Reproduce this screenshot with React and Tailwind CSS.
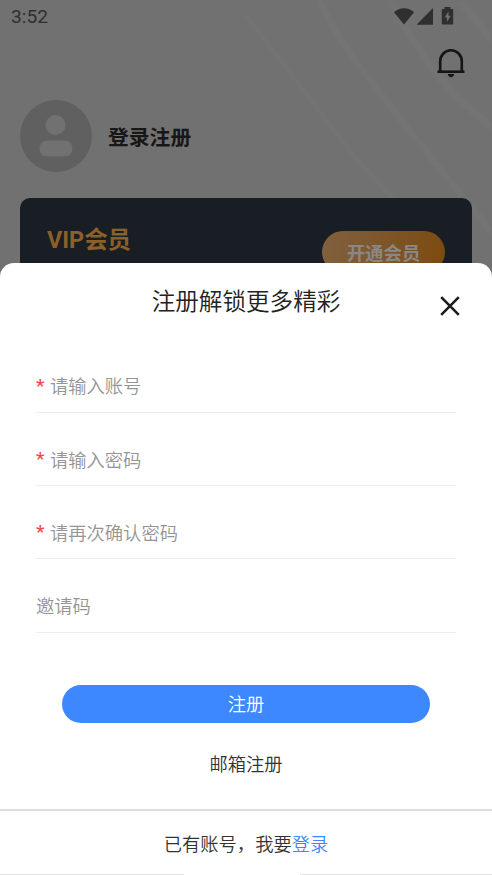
import React, { useState } from "react";

const fields = [
  { name: "account", placeholder: "请输入账号", required: true },
  { name: "password", placeholder: "请输入密码", required: true, type: "password" },
  { name: "confirm", placeholder: "请再次确认密码", required: true, type: "password" },
  { name: "invite", placeholder: "邀请码", required: false },
];

const StatusBar = () => (
  <div className="flex h-[34px] items-center justify-between pl-[11px] pr-[37px] text-[#2f2f2f]">
    <span className="font-[Roboto] text-[19.200px] font-[450] leading-none">3:52</span>
    <svg width="62" height="20" viewBox="0 0 62 20" fill="currentColor">
      <path d="M1 5.200C6.500 -.2 15.500 -.2 21 5.200L11 17.400Z" />
      <path d="M40 1v16.800H23.500Z" />
      <path
        fillRule="evenodd"
        d="M51.500 0h6v2h1.700a1 1 0 0 1 1 1v13.500a1 1 0 0 1-1 1h-9.400a1 1 0 0 1-1-1V3a1 1 0 0 1 1-1h1.700ZM55.500 4.500 51.500 10.500H54v4.500l3.600-6.200h-2.100Z"
      />
    </svg>
  </div>
);

const Rays = () => (
  <svg
    className="absolute inset-0 h-[275px] w-full blur-[1px]"
    viewBox="0 0 492 275"
    fill="none"
    stroke="#ffffff"
    strokeOpacity="0.025"
  >
    <path d="M246 15C275 55 300 84 320 112S365 170 395 200" strokeWidth="4" />
    <path d="M318 0C345 50 370 80 395 112S440 170 492 232" strokeWidth="7" />
    <path d="M390 0C415 45 435 75 458 98L492 128" strokeWidth="8" />
    <path d="M460 0 492 40" strokeWidth="9" />
  </svg>
);

const Profile = () => (
  <div className="relative h-[275px] overflow-hidden bg-[#717171]">
    <Rays />
    <div className="relative">
      <StatusBar />
      <div className="flex justify-end pr-[26px] pt-[14px]">
        <svg width="29" height="30" viewBox="0 0 29 30" fill="none" stroke="#151515">
          <path d="M3.200 23V13.500a10.800 11.300 0 0 1 21.600 0v9.500" strokeWidth="2.600" />
          <path d="M.5 23.700h27" strokeWidth="2.600" />
          <path d="M10.800 26h6.400c-.6 4.200-5.800 4.200-6.400 0Z" fill="#151515" stroke="none" />
        </svg>
      </div>
      <div className="mt-[22px] flex items-center gap-4 px-5">
        <svg width="72" height="72" viewBox="0 0 72 72">
          <circle cx="36" cy="36" r="36" fill="#606060" />
          <circle cx="35.500" cy="25" r="10" fill="#717171" />
          <rect x="19.500" y="40.500" width="33" height="16" rx="8" fill="#717171" />
        </svg>
        <span className="pt-[6px] text-[20.800px] font-bold text-[#171717]">登录注册</span>
      </div>
      <div className="mx-5 mt-[26px] flex h-[100px] items-start justify-between rounded-[10px] bg-[#191e25] pl-[27px] pr-[27px]">
        <span className="mt-[25px] text-[23.400px] font-bold leading-[34px] text-[#8b6029]">
          VIP会员
        </span>
        <button className="mt-[33px] h-[42px] w-[123px] rounded-full bg-linear-to-r from-[#80603e] to-[#7c4b0c] pt-[3px] text-[18.400px] font-bold text-[#8b8784]">
          开通会员
        </button>
      </div>
    </div>
  </div>
);

const Field = ({ field, value, onChange }) => (
  <label className="flex h-[73.300px] items-end border-b border-[#ededed] pb-[11px]">
    {field.required && (
      <span className="w-[14px] shrink-0 font-[Roboto] text-[19px] font-medium leading-[31px] text-[#f04a4a]">*</span>
    )}
    <input
      type={field.type || "text"}
      value={value}
      onChange={onChange}
      placeholder={field.placeholder}
      className="h-[28px] w-full min-w-0 text-[18.300px] font-[350] text-[#222222] outline-none placeholder:text-[#959595]"
    />
  </label>
);

const RegisterSheet = () => {
  const [form, setForm] = useState({ account: "", password: "", confirm: "", invite: "" });

  return (
    <div className="absolute inset-x-0 bottom-0 flex h-[612px] flex-col rounded-t-[14px] bg-white font-[350]">
      <div className="flex h-[76.500px] items-start pl-[52px] pr-[32px]">
        <h2 className="mt-[21px] flex-1 text-center text-[23.600px] leading-[37px] text-[#222222]">
          注册解锁更多精彩
        </h2>
        <button className="mt-[33px]">
          <svg width="20" height="20" viewBox="0 0 20 20" fill="none" stroke="#1c1c1c" strokeWidth="2.600">
            <path d="m1.200 1.200 17.600 17.600M18.800 1.200l-17.600 17.600" />
          </svg>
        </button>
      </div>

      <form className="px-9">
        {fields.map((f) => (
          <Field
            key={f.name}
            field={f}
            value={form[f.name]}
            onChange={(e) => setForm({ ...form, [f.name]: e.target.value })}
          />
        ))}
        <button
          type="button"
          className="mx-[26px] mt-[52px] flex h-[38px] w-[368px] items-center justify-center rounded-full bg-[#3d88ff] pt-[3px] text-[18.300px] text-white"
        >
          注册
        </button>
      </form>

      <button className="mt-[28px] text-center text-[18.300px] leading-[28px] text-[#333333]">邮箱注册</button>

      <div className="mt-auto flex h-[66px] flex-col justify-between border-t-2 border-[#dddddd]">
        <p className="pt-[20px] text-center text-[18.300px] leading-[28px] text-[#333333]">
          已有账号，我要<a className="text-[#3d88ff]">登录</a>
        </p>
        <div className="flex justify-between">
          <div className="h-px w-[184px] bg-[#e5e5e5]" />
          <div className="h-px w-[192px] bg-[#e5e5e5]" />
        </div>
      </div>
    </div>
  );
};

const App = () => (
  <div className="relative h-[875px] w-full overflow-hidden bg-[#717171] font-[Roboto,'Noto_Sans_CJK_SC',sans-serif]">
    <Profile />
    <RegisterSheet />
  </div>
);

export default App;
